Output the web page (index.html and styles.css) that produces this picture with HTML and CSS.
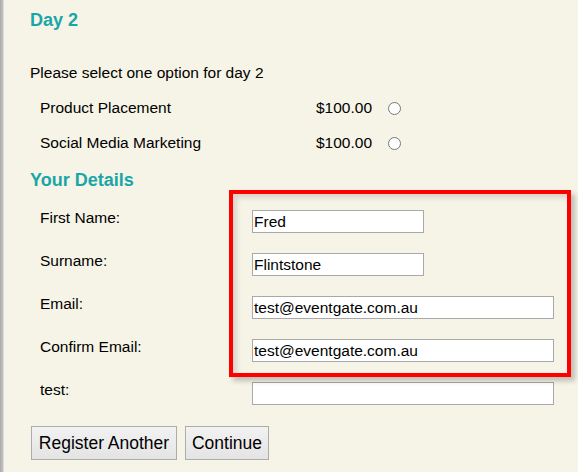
FILE: index.html
```html
<!DOCTYPE html>
<html lang="en">
<head>
    <meta charset="UTF-8">
    <meta name="viewport" content="width=device-width, initial-scale=1.0">
    <title>Registration</title>
    <link rel="stylesheet" href="styles.css">
</head>
<body>
    <div class="page">
        <h2 class="section-title day-title">Day 2</h2>

        <p class="intro">Please select one option for day 2</p>

        <div class="options">
            <label class="option">
                <span class="option-name">Product Placement</span>
                <span class="option-price">$100.00</span>
                <input type="radio" name="day2" value="product-placement">
            </label>
            <label class="option">
                <span class="option-name">Social Media Marketing</span>
                <span class="option-price">$100.00</span>
                <input type="radio" name="day2" value="social-media">
            </label>
        </div>

        <h2 class="section-title details-title">Your Details</h2>

        <div class="fields">
            <div class="field">
                <label for="firstName">First Name:</label>
                <input type="text" id="firstName" class="short" value="Fred">
            </div>
            <div class="field">
                <label for="surname">Surname:</label>
                <input type="text" id="surname" class="short" value="Flintstone">
            </div>
            <div class="field">
                <label for="email">Email:</label>
                <input type="text" id="email" class="long" value="test@eventgate.com.au">
            </div>
            <div class="field">
                <label for="confirmEmail">Confirm Email:</label>
                <input type="text" id="confirmEmail" class="long" value="test@eventgate.com.au">
            </div>
            <div class="field">
                <label for="test">test:</label>
                <input type="text" id="test" class="long" value="">
            </div>
        </div>

        <div class="actions">
            <button type="button" class="btn-register">Register Another</button>
            <button type="button" class="btn-continue">Continue</button>
        </div>

        <div class="highlight"></div>
    </div>
</body>
</html>
```

FILE: styles.css
```css
body {
    margin: 0;
    background: linear-gradient(to right, #a9a9a9 0, #c4c4c4 3px, #f6f4e7 4px);
    font-family: "Liberation Sans", Arial, sans-serif;
    font-size: 15.5px;
    line-height: 18px;
    color: #000;
}
.page {
    position: relative;
    min-height: 472px;
    padding: 10px 0 0 30px;
    box-sizing: border-box;
}
.section-title {
    margin: 0;
    font-size: 18px;
    line-height: 20px;
    font-weight: bold;
    color: #19a6a7;
}
.intro {
    margin: 34px 0 0;
}
.options {
    display: flex;
    flex-direction: column;
    gap: 17px;
    margin: 17px 0 0 10px;
}
.option {
    display: grid;
    grid-template-columns: 276px 72px 13px;
    align-items: center;
    height: 18px;
}
.option input {
    margin: 0;
    width: 13px;
    height: 13px;
}
.details-title {
    margin-top: 18px;
}
.fields {
    display: flex;
    flex-direction: column;
    gap: 19px;
    margin: 19px 0 0 10px;
}
.field {
    display: grid;
    grid-template-columns: 212px auto;
    align-items: start;
    height: 24px;
}
.field input {
    box-sizing: border-box;
    height: 23px;
    margin: 1px 0 0;
    padding: 0 1px;
    border: 1px solid #a9a9a9;
    background: #fff;
    font-family: inherit;
    font-size: 15.5px;
    color: #000;
}
.field input.short {
    width: 172px;
}
.field input.long {
    width: 302px;
}
.actions {
    display: flex;
    gap: 8px;
    margin: 21px 0 0 1px;
}
.actions button {
    box-sizing: border-box;
    height: 34px;
    padding: 0;
    border: 1px solid #acacac;
    background: linear-gradient(#f2f2f2, #e4e4e4);
    font-family: inherit;
    font-size: 17.5px;
    color: #000;
}
.btn-register {
    width: 146px;
}
.btn-continue {
    width: 84px;
}
.highlight {
    position: absolute;
    left: 229px;
    top: 190px;
    width: 334px;
    height: 179px;
    border: 4px solid #ff0000;
    box-shadow: 4px 4px 5px rgba(0, 0, 0, 0.22), inset 4px 4px 5px rgba(0, 0, 0, 0.12);
    pointer-events: none;
}
```
